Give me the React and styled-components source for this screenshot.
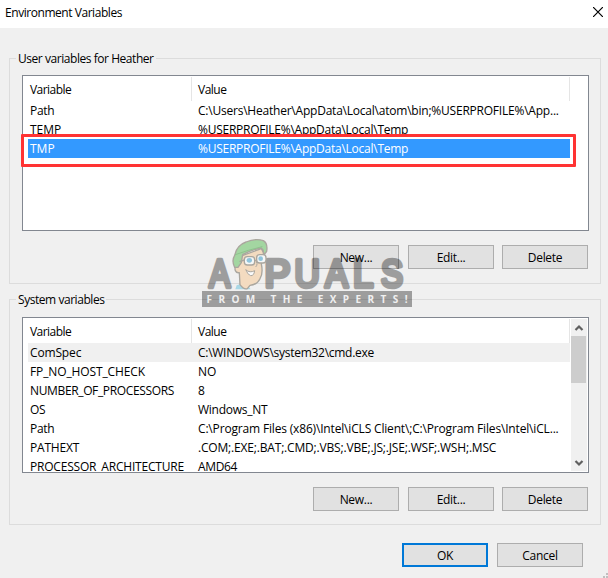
import React from 'react'
import styled, { createGlobalStyle } from 'styled-components'

const GlobalStyle = createGlobalStyle`
  body {
    margin: 0;
    overflow: hidden;
    font-family: 'Open Sans', 'Noto Sans', sans-serif;
    font-size: 12px;
    line-height: 19px;
    color: #000;
  }
`

const Dialog = styled.div`
  position: relative;
  box-sizing: border-box;
  width: 608px;
  height: 578px;
  background-color: #f0f0f0;
`

const TitleBar = styled.div`
  display: flex;
  justify-content: space-between;
  height: 28px;
  padding: 0 5px;
  box-sizing: border-box;
  background-color: #fff;
  line-height: 26px;
`

const CloseIcon = styled.svg`
  margin-top: 7px;
`

const Label = styled.span`
  display: inline-block;
  white-space: pre;
  letter-spacing: ${({ $track }) => $track || 0}px;
`

const Content = styled.div`
  display: flex;
  flex-direction: column;
  gap: 15px;
  padding: 30px 7px 0 9px;
`

const Group = styled.section`
  box-sizing: border-box;
  width: 592px;
  height: 226px;
  border: 1px solid #dcdcdc;
`

const Legend = styled.div`
  width: max-content;
  height: 16px;
  margin: -10px 0 0 6px;
  padding: 0 2px;
  background-color: #f0f0f0;
`

const List = styled.div`
  display: flex;
  box-sizing: border-box;
  width: 567px;
  height: 156px;
  margin: ${({ $top }) => $top}px 0 0 12px;
  border: 1px solid #828790;
  background-color: #fff;
  overflow: hidden;
`

const Table = styled.div`
  width: 547px;
  height: 154px;
  overflow: hidden;
`

const HeaderRow = styled.div`
  display: grid;
  grid-template-columns: 169px 378px;
  height: 24px;
  padding: 1px 0 0;
`

const HeaderCell = styled.div`
  box-sizing: border-box;
  height: 24px;
  padding-left: 7px;
  border-right: 1px solid #e5e5e5;
  line-height: 25px;

  & + & {
    padding-left: 6px;
  }
`

const Row = styled.div`
  display: grid;
  grid-template-columns: 168px 1fr;
  height: 19px;
  margin-left: 5px;
  padding-left: 2px;
  background-color: ${({ $state }) => ($state === 'selected' ? '#3399ff' : $state === 'hot' ? '#f0f0f0' : 'transparent')};
  color: ${({ $state }) => ($state === 'selected' ? '#fff' : '#000')};
  line-height: 19px;
`

const Scrollbar = styled.div`
  display: flex;
  flex-direction: column;
  align-items: center;
  width: 16px;
  height: 152px;
  margin: 1px 0 0 1px;
  background-color: #f0f0f0;
`

const Thumb = styled.div`
  width: 15px;
  height: 47px;
  margin-bottom: auto;
  align-self: flex-start;
  background-color: #cdcdcd;
`

const Arrow = styled.svg`
  flex: none;
  width: 16px;
  height: 17px;
`

const Buttons = styled.div`
  display: flex;
  justify-content: flex-end;
  gap: 8px;
  margin: 14px 12px 0 0;
`

const Footer = styled.div`
  display: flex;
  justify-content: flex-end;
  gap: 9px;
  padding: 18px 25px 0 0;
`

const Button = styled.button`
  box-sizing: border-box;
  width: 86px;
  height: 24px;
  margin: 0 ${({ $gap }) => $gap || 0}px 0 0;
  padding: 0;
  border: ${({ $primary }) => ($primary ? '2px solid #0078d7' : '1px solid #adadad')};
  background-color: #e1e1e1;
  color: #000;
  font: inherit;
  letter-spacing: -0.3px;
  line-height: ${({ $primary }) => ($primary ? 19 : 21)}px;
`

const Highlight = styled.div`
  position: absolute;
  left: 21px;
  top: 134px;
  box-sizing: border-box;
  width: 555px;
  height: 33px;
  border: 3px solid #ff3333;
  border-radius: 1px;
`

const Watermark = styled.svg`
  position: absolute;
  left: 200px;
  top: 236px;
  pointer-events: none;
`

const LogoLetter = styled.text`
  font-family: 'Liberation Sans', sans-serif;
  font-size: 39px;
  stroke: #000;
  stroke-width: 4.6px;
  stroke-linejoin: round;
`

const Tagline = styled.text`
  font-family: 'Open Sans', sans-serif;
  font-size: 10px;
  font-weight: 700;
  fill: #fff;
`

const Grip = styled.svg`
  position: absolute;
  right: 0;
  bottom: 0;
`

const userVariables = [
  { name: 'Path', nameTrack: -0.3, value: 'C:\\Users\\Heather\\AppData\\Local\\atom\\bin;%USERPROFILE%\\App...', track: -0.22 },
  { name: 'TEMP', value: '%USERPROFILE%\\AppData\\Local\\Temp', track: -0.25 },
  { name: 'TMP', value: '%USERPROFILE%\\AppData\\Local\\Temp', track: -0.25, state: 'selected' }
]

const systemVariables = [
  { name: 'ComSpec', nameTrack: -0.15, value: 'C:\\WINDOWS\\system32\\cmd.exe', track: -0.28, state: 'hot' },
  { name: 'FP_NO_HOST_CHECK', nameTrack: -0.12, value: 'NO' },
  { name: 'NUMBER_OF_PROCESSORS', nameTrack: -0.36, value: '8' },
  { name: 'OS', nameTrack: -0.3, value: 'Windows_NT', track: -0.25 },
  { name: 'Path', nameTrack: -0.3, value: 'C:\\Program Files (x86)\\Intel\\iCLS Client\\;C:\\Program Files\\Intel\\iCL...', track: -0.17 },
  { name: 'PATHEXT', nameTrack: -0.2, value: '.COM;.EXE;.BAT;.CMD;.VBS;.VBE;.JS;.JSE;.WSF;.WSH;.MSC', track: -0.18 },
  { name: 'PROCESSOR_ARCHITECTURE', nameTrack: -0.2, value: 'AMD64', track: -0.35 }
]

const logoLetters = [
  { char: 'A', x: 9.3, width: 20.8 },
  { char: 'P', x: 64.6, width: 26 },
  { char: 'U', x: 94.4, width: 25.3 },
  { char: 'A', x: 125.3, width: 22.6 },
  { char: 'L', x: 153, width: 20.3 },
  { char: 'S', x: 181, width: 22 }
]

const VariableGroup = ({ title, variables, scroll }) => (
  <Group>
    <Legend><Label $track={-0.45}>{title}</Label></Legend>
    <List $top={scroll ? 11 : 10}>
      <Table>
        <HeaderRow>
          <HeaderCell><Label $track={-0.55}>Variable</Label></HeaderCell>
          <HeaderCell><Label $track={-0.5}>Value</Label></HeaderCell>
        </HeaderRow>
        {variables.map((v) => (
          <Row key={v.name} $state={v.state}>
            <Label $track={v.nameTrack}>{v.name}</Label>
            <Label $track={v.track}>{v.value}</Label>
          </Row>
        ))}
      </Table>
      {scroll && (
        <Scrollbar>
          <Arrow><path d='M4.5 11 L8 7.5 L11.5 11' fill='none' stroke='#606060' strokeWidth='2.2' /></Arrow>
          <Thumb />
          <Arrow><path d='M4.5 7 L8 10.5 L11.5 7' fill='none' stroke='#606060' strokeWidth='2.2' /></Arrow>
        </Scrollbar>
      )}
    </List>
    <Buttons>
      <Button $gap={1}>New...</Button>
      <Button>Edit...</Button>
      <Button>Delete</Button>
    </Buttons>
  </Group>
)

const Logo = () => (
  <Watermark width='216' height='74'>
    <g opacity='0.34'>
      {logoLetters.map((l) => (
        <LogoLetter key={l.x} x={l.x} y='50.8' textLength={l.width} lengthAdjust='spacingAndGlyphs'>{l.char}</LogoLetter>
      ))}
      <rect x='2' y='55' width='210' height='16' />
    </g>
    <Tagline x='6.5' y='67' textLength='201' opacity='0.85'>FROM THE EXPERTS!</Tagline>
    <g transform='scale(0.3333)' stroke='#aaa69e' strokeWidth='4' strokeLinejoin='round' strokeLinecap='round'>
      <path d='M106 160 L110 148 L122 144 L140 158 L146 152 L152 160 Z' fill='#a9d8e6' stroke='none' />
      <path d='M118 62 L114 90 Q102 92 106 104 Q110 112 118 110 L120 146 Q132 162 142 158 L150 148 Q172 146 180 128 Q190 112 184 84 L194 56 L184 38 Z' fill='#f3dbc0' />
      <path d='M104 94 Q94 74 104 58 Q110 28 138 18 Q166 6 190 14 Q204 22 200 46 Q196 54 190 54 Q192 42 184 36 Q158 40 128 56 L124 80 L114 94 Z' fill='#a3d6a1' />
      <path d='M106 56 Q144 42 186 32' fill='none' stroke='#8fc28e' strokeWidth='3' />
      <path d='M120 76 L134 72' fill='none' />
      <rect x='133' y='62' width='31' height='25' rx='9' fill='#f5f7f7' />
      <rect x='170' y='56' width='28' height='25' rx='9' fill='#f5f7f7' />
      <ellipse cx='148' cy='73' rx='8' ry='7' fill='#8fc4dc' stroke='none' />
      <ellipse cx='182' cy='68' rx='7' ry='7' fill='#8fc4dc' stroke='none' />
      <path d='M166 72 Q176 84 168 92' fill='none' strokeWidth='3' />
      <path d='M138 102 Q150 112 164 104 Q162 120 152 119 Q142 116 138 102 Z' fill='#fafafa' strokeWidth='3' />
    </g>
  </Watermark>
)

const App = () => (
  <>
    <GlobalStyle />
    <Dialog>
      <TitleBar>
        <Label $track={-0.45}>Environment Variables</Label>
        <CloseIcon width='10' height='10'><path d='M0 0 L10 10 M10 0 L0 10' stroke='#000' strokeWidth='1.2' /></CloseIcon>
      </TitleBar>
      <Content>
        <VariableGroup title='User variables for Heather' variables={userVariables} />
        <VariableGroup title='System variables' variables={systemVariables} scroll />
      </Content>
      <Footer>
        <Button $primary>OK</Button>
        <Button>Cancel</Button>
      </Footer>
      <Highlight />
      <Logo />
      <Grip width='5' height='5'><path d='M3 0h2v2h-2z M0 3h2v2h-2z M3 3h2v2h-2z' fill='#bfbfbf' /></Grip>
    </Dialog>
  </>
)

export default App
